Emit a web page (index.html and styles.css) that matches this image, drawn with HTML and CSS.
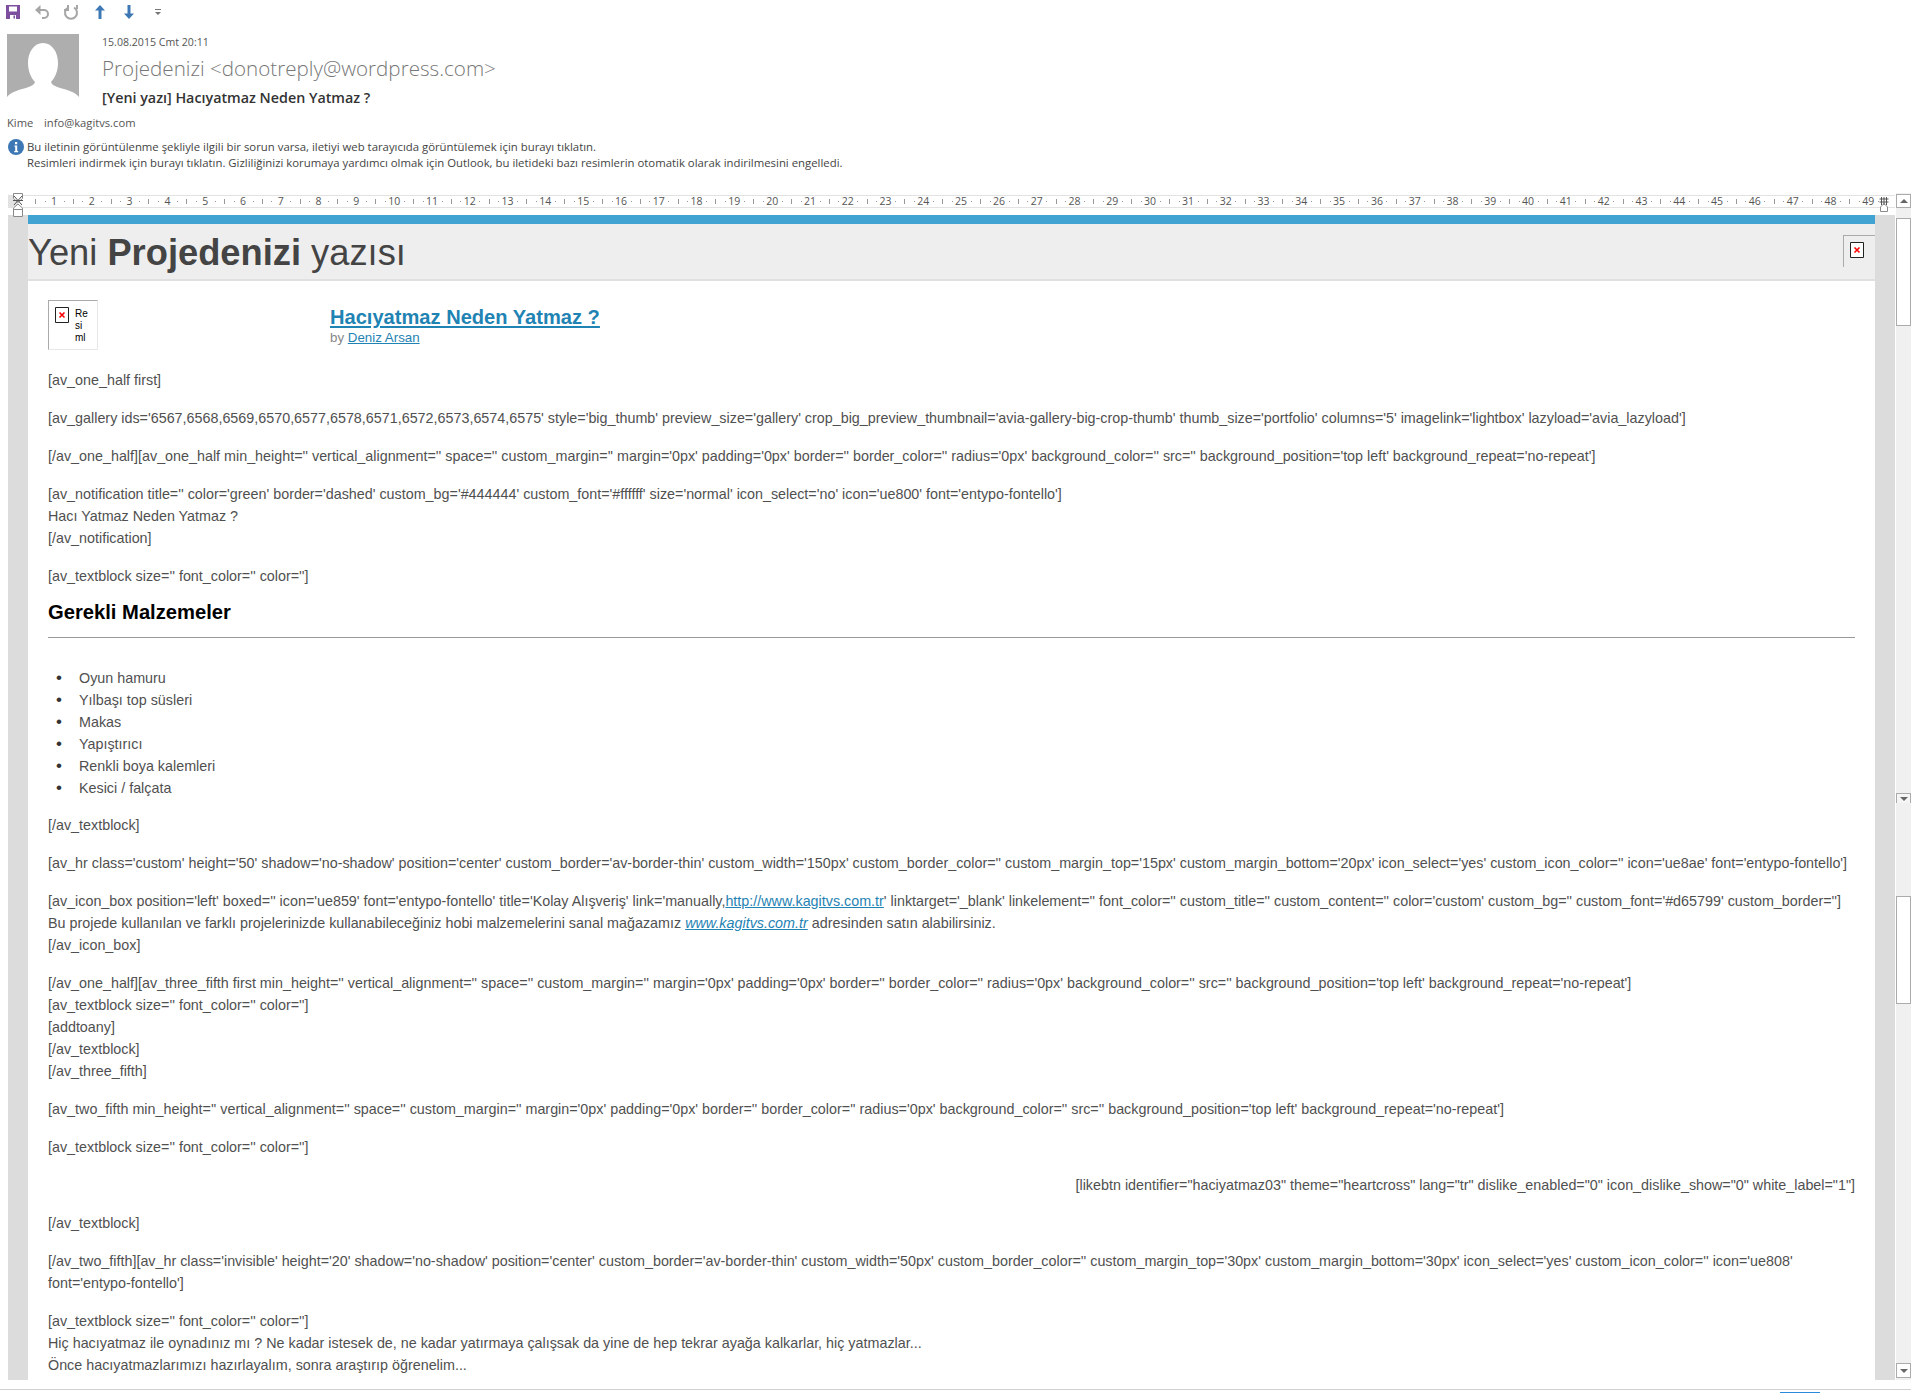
FILE: index.html
```html
<!DOCTYPE html>
<html lang="tr">
<head>
  <meta charset="UTF-8" />
  <title>[Yeni yazı] Hacıyatmaz Neden Yatmaz ?</title>
  <link rel="stylesheet" href="styles.css">
</head>
<body>

  <!-- Hızlı erişim araç çubuğu -->
  <div class="toolbar">
    <svg class="tool" width="16" height="16" viewBox="0 0 16 16"><path fill="#7d4f9e" d="M1 1h14v14H1z"/><path fill="#fff" d="M4 2.500h8v5H4zM5 11h6v4H5z"/><path fill="#7d4f9e" d="M8.500 11.500h1.500v3H8.500z"/></svg>
    <svg class="tool" width="16" height="16" viewBox="0 0 16 16"><path fill="none" stroke="#a6a6a6" stroke-width="2" d="M3 6h7a4 4 0 0 1 4 4v0a4 4 0 0 1-4 4H8"/><path fill="#a6a6a6" d="M6.500 1v10L1 6z"/></svg>
    <svg class="tool" width="16" height="16" viewBox="0 0 16 16"><path fill="none" stroke="#a6a6a6" stroke-width="2" d="M5 3.500a6 6 0 1 0 6 0"/><path fill="#a6a6a6" d="M6 1v6H1V5h3V1zM13 1h2v4h-2z"/></svg>
    <svg class="tool" width="16" height="16" viewBox="0 0 16 16"><path fill="#3d78b5" d="M6.500 15V6.500H3L8 1l5 5.500H9.500V15z"/></svg>
    <svg class="tool" width="16" height="16" viewBox="0 0 16 16"><path fill="#3d78b5" d="M6.500 1v8.500H3L8 15l5-5.500H9.500V1z"/></svg>
    <svg class="tool" width="16" height="16" viewBox="0 0 16 16"><path fill="#777" d="M5 5h6v1H5zM5 8h6l-3 3z"/></svg>
  </div>

  <!-- İleti başlığı -->
  <div class="msg-head">
    <svg class="avatar" width="72" height="72" viewBox="0 0 72 72"><path fill="#aeaeae" d="M0 0h72v72H0z"/><path fill="#fff" d="M36 9c-9 0-15 9-15 20 0 8 3 15 7 19-1 3-4 4-9 6-8 2-15 4-19 9v9h72v-9c-4-5-11-7-19-9-5-2-8-3-9-6 4-4 7-11 7-19 0-11-6-20-15-20z"/></svg>
    <div class="msg-info">
      <div class="msg-date">15.08.2015 Cmt 20:11</div>
      <div class="msg-from">Projedenizi &lt;donotreply@wordpress.com&gt;</div>
      <div class="msg-subject">[Yeni yazı] Hacıyatmaz Neden Yatmaz ?</div>
    </div>
  </div>
  <div class="msg-to"><span class="to-label">Kime</span>info@kagitvs.com</div>
  <div class="msg-notice">
    <svg class="info-icon" width="16" height="16" viewBox="0 0 16 16"><circle cx="8" cy="8" r="8" fill="#3d78b5"/><path fill="#fff" d="M7 3h2.200v2.200H7zM6.500 6.500h2.700V12h1v1.300h-4V12h1V7.800h-.7z"/></svg>
    <div>
      Bu iletinin görüntülenme şekliyle ilgili bir sorun varsa, iletiyi web tarayıcıda görüntülemek için burayı tıklatın.<br>
      Resimleri indirmek için burayı tıklatın. Gizliliğinizi korumaya yardımcı olmak için Outlook, bu iletideki bazı resimlerin otomatik olarak indirilmesini engelledi.
    </div>
  </div>

  <div class="reader">
    <div class="reader-main">
      <!-- Cetvel -->
      <div class="ruler">
        <div class="ruler-start"></div>
        <span>1</span><span>2</span><span>3</span><span>4</span><span>5</span><span>6</span><span>7</span><span>8</span><span>9</span><span>10</span>
        <span>11</span><span>12</span><span>13</span><span>14</span><span>15</span><span>16</span><span>17</span><span>18</span><span>19</span><span>20</span>
        <span>21</span><span>22</span><span>23</span><span>24</span><span>25</span><span>26</span><span>27</span><span>28</span><span>29</span><span>30</span>
        <span>31</span><span>32</span><span>33</span><span>34</span><span>35</span><span>36</span><span>37</span><span>38</span><span>39</span><span>40</span>
        <span>41</span><span>42</span><span>43</span><span>44</span><span>45</span><span>46</span><span>47</span><span>48</span><span>49</span>
        <svg class="marker marker-left" width="12" height="24" viewBox="0 0 12 24"><path fill="#fff" stroke="#8a8a8a" d="M1.500.5h9v5l-4.500 4-4.500-4zM1.500 15l4.500-4 4.500 4v8.500h-9zM1.500 16.500h9"/><path stroke="#555" fill="none" d="M2 3l8 9M10 3l-8 9M1 7.500h10"/></svg>
        <svg class="marker marker-right" width="10" height="16" viewBox="0 0 10 16"><path fill="#fff" stroke="#8a8a8a" d="M1.500 11L5 7.500 8.500 11v4.500h-7z"/><path stroke="#555" fill="none" d="M2.500 1v8M5 1v8M7.500 1v8M.5 3h9M.5 6h9"/></svg>
      </div>

      <div class="doc">
        <div class="doc-strip"></div>
        <div class="page">
          <div class="page-bar"></div>
          <div class="page-title">
            <h1>Yeni <b>Projedenizi</b> yazısı</h1>
            <div class="logo-missing">
              <svg class="broken" width="14" height="16" viewBox="0 0 14 16"><path fill="#fff" stroke="#222" d="M.5.500h13v15H.5z"/><path stroke="#f00" stroke-width="1.600" fill="none" d="M4.500 5.500l5 5M9.500 5.500l-5 5"/></svg>
            </div>
          </div>
          <div class="page-body">
            <div class="post-head">
              <div class="post-thumb-col">
                <div class="post-thumb">
                  <svg class="broken" width="14" height="16" viewBox="0 0 14 16"><path fill="#fff" stroke="#222" d="M.5.500h13v15H.5z"/><path stroke="#f00" stroke-width="1.600" fill="none" d="M4.500 5.500l5 5M9.500 5.500l-5 5"/></svg>
                  <span class="thumb-alt">Re si ml</span>
                </div>
              </div>
              <div class="post-meta">
                <a class="post-link" href="#">Hacıyatmaz Neden Yatmaz ?</a>
                <div class="post-by">by <a href="#">Deniz Arsan</a></div>
              </div>
            </div>

            <p>[av_one_half first]</p>
            <p>[av_gallery ids='6567,6568,6569,6570,6577,6578,6571,6572,6573,6574,6575' style='big_thumb' preview_size='gallery' crop_big_preview_thumbnail='avia-gallery-big-crop-thumb' thumb_size='portfolio' columns='5' imagelink='lightbox' lazyload='avia_lazyload']</p>
            <p>[/av_one_half][av_one_half min_height='' vertical_alignment='' space='' custom_margin='' margin='0px' padding='0px' border='' border_color='' radius='0px' background_color='' src='' background_position='top left' background_repeat='no-repeat']</p>
            <p>[av_notification title='' color='green' border='dashed' custom_bg='#444444' custom_font='#ffffff' size='normal' icon_select='no' icon='ue800' font='entypo-fontello']<br>Hacı Yatmaz Neden Yatmaz ?<br>[/av_notification]</p>
            <p>[av_textblock size='' font_color='' color='']</p>
            <h2>Gerekli Malzemeler</h2>
            <hr>
            <ul>
              <li>Oyun hamuru</li>
              <li>Yılbaşı top süsleri</li>
              <li>Makas</li>
              <li>Yapıştırıcı</li>
              <li>Renkli boya kalemleri</li>
              <li>Kesici / falçata</li>
            </ul>
            <p>[/av_textblock]</p>
            <p>[av_hr class='custom' height='50' shadow='no-shadow' position='center' custom_border='av-border-thin' custom_width='150px' custom_border_color='' custom_margin_top='15px' custom_margin_bottom='20px' icon_select='yes' custom_icon_color='' icon='ue8ae' font='entypo-fontello']</p>
            <p>[av_icon_box position='left' boxed='' icon='ue859' font='entypo-fontello' title='Kolay Alışveriş' link='manually,<a href="#">http://www.kagitvs.com.tr</a>' linktarget='_blank' linkelement='' font_color='' custom_title='' custom_content='' color='custom' custom_bg='' custom_font='#d65799' custom_border='']<br>Bu projede kullanılan ve farklı projelerinizde kullanabileceğiniz hobi malzemelerini sanal mağazamız <a href="#"><i>www.kagitvs.com.tr</i></a> adresinden satın alabilirsiniz.<br>[/av_icon_box]</p>
            <p>[/av_one_half][av_three_fifth first min_height='' vertical_alignment='' space='' custom_margin='' margin='0px' padding='0px' border='' border_color='' radius='0px' background_color='' src='' background_position='top left' background_repeat='no-repeat']<br>[av_textblock size='' font_color='' color='']<br>[addtoany]<br>[/av_textblock]<br>[/av_three_fifth]</p>
            <p>[av_two_fifth min_height='' vertical_alignment='' space='' custom_margin='' margin='0px' padding='0px' border='' border_color='' radius='0px' background_color='' src='' background_position='top left' background_repeat='no-repeat']</p>
            <p>[av_textblock size='' font_color='' color='']</p>
            <p class="right">[likebtn identifier="haciyatmaz03" theme="heartcross" lang="tr" dislike_enabled="0" icon_dislike_show="0" white_label="1"]</p>
            <p>[/av_textblock]</p>
            <p>[/av_two_fifth][av_hr class='invisible' height='20' shadow='no-shadow' position='center' custom_border='av-border-thin' custom_width='50px' custom_border_color='' custom_margin_top='30px' custom_margin_bottom='30px' icon_select='yes' custom_icon_color='' icon='ue808' font='entypo-fontello']</p>
            <p>[av_textblock size='' font_color='' color='']<br>Hiç hacıyatmaz ile oynadınız mı ? Ne kadar istesek de, ne kadar yatırmaya çalışsak da yine de hep tekrar ayağa kalkarlar, hiç yatmazlar...<br>Önce hacıyatmazlarımızı hazırlayalım, sonra araştırıp öğrenelim...</p>
          </div>
        </div>
        <div class="doc-strip"></div>
      </div>
    </div>

    <!-- Kaydırma çubukları -->
    <div class="scrollbar">
      <div class="scroll-btn"><span class="arrow-up"></span></div>
      <div class="scroll-thumb thumb-first"></div>
      <div class="scroll-btn scroll-btn-fade"><span class="arrow-down"></span></div>
      <div class="scroll-thumb thumb-second"></div>
      <div class="scroll-btn scroll-btn-last"><span class="arrow-down"></span></div>
    </div>
  </div>

  <div class="status-line"><div class="status-mark"></div></div>

</body>
</html>
```

FILE: styles.css
```css
* {
  box-sizing: border-box;
}
html, body {
  height: 100%;
}
body {
  margin: 0;
  background: #fff;
  font-family: "Open Sans", "Noto Sans", sans-serif;
  color: #444;
  overflow: hidden;
}

/* Araç çubuğu */
.toolbar {
  height: 24px;
  padding: 4px 0 0 5px;
  display: flex;
  gap: 13px;
}
.tool {
  display: block;
  flex: none;
  width: 16px;
  height: 16px;
}

/* İleti başlığı */
.msg-head {
  height: 72px;
  margin: 10px 0 0 7px;
  display: flex;
  gap: 23px;
}
.avatar {
  display: block;
}
.msg-info {
  padding-top: 1px;
}
.msg-date {
  font-size: 10.600px;
  line-height: 14px;
  color: #555;
}
.msg-from {
  margin-top: 4px;
  font-size: 20.600px;
  line-height: 30px;
  font-weight: 300;
  color: #777;
}
.msg-subject {
  margin-top: 5px;
  font-size: 14.300px;
  line-height: 20px;
  font-weight: 600;
  color: #333;
}
.msg-to {
  margin: 10px 0 0 7px;
  font-size: 11.200px;
  line-height: 14px;
  color: #555;
}
.to-label {
  display: inline-block;
  width: 37px;
}
.msg-notice {
  margin: 9px 0 0 8px;
  display: flex;
  gap: 3px;
  font-size: 11.370px;
  line-height: 16px;
  color: #444;
}
.info-icon {
  flex: none;
  display: block;
}

/* Okuma alanı */
.reader {
  margin-top: 22px;
  display: flex;
  height: 1187px;
}
.reader-main {
  margin-left: 8px;
  width: 1887px;
  flex: none;
  display: flex;
  flex-direction: column;
}

/* Cetvel */
.ruler {
  position: relative;
  margin-top: 2px;
  height: 13px;
  flex: none;
  display: flex;
  border-top: 1px solid #e2e2e2;
  border-bottom: 1px solid #e2e2e2;
}
.ruler-start {
  flex: none;
  width: 27.100px;
  background: linear-gradient(to right, #e2e2e2 10px, #fff 10px);
}
.ruler span {
  flex: none;
  width: 37.800px;
  text-align: center;
  font-size: 10.500px;
  line-height: 11px;
  color: #555;
  background:
    linear-gradient(#999, #999) 9.500px 5px / 1px 1px no-repeat,
    linear-gradient(#999, #999) 0 3px / 1px 5px no-repeat,
    linear-gradient(#999, #999) 28.500px 5px / 1px 1px no-repeat;
}
.marker {
  position: absolute;
  top: -3px;
}
.marker-left {
  left: 4px;
}
.marker-right {
  top: 0;
  right: 6px;
}

.doc {
  margin-top: 7px;
  display: flex;
  height: 1165px;
  overflow: hidden;
}
.doc-strip {
  flex: none;
  width: 20px;
  background: #dcdcdc;
}
.page {
  flex: 1;
  min-width: 0;
  font-family: "Liberation Sans", Arial, sans-serif;
  color: #505050;
}
.page-bar {
  height: 9px;
  background: #41a3d1;
}
.page-title {
  height: 57px;
  display: flex;
  justify-content: space-between;
  align-items: flex-start;
  background: #eee;
  border-bottom: 2px solid #e0e0e0;
}
.page-title h1 {
  margin: 9px 0 0;
  font-size: 36.300px;
  line-height: 40px;
  font-weight: normal;
  color: #444;
}
.logo-missing {
  margin-top: 11px;
  width: 32px;
  height: 32px;
  padding: 6px 0 0 6px;
  border-top: 1px solid #aaa;
  border-left: 1px solid #aaa;
}
.broken {
  flex: none;
  display: block;
}
.page-body {
  padding: 19px 20px 0;
  font-size: 14.330px;
  line-height: 22px;
}
.page-body p {
  margin: 0 0 16px;
}
.page-body a {
  color: #1f83b3;
}
.page-body .right {
  text-align: right;
}
.post-head {
  display: flex;
  height: 59px;
  margin-bottom: 10px;
}
.post-thumb-col {
  flex: none;
  width: 282px;
}
.post-thumb {
  width: 50px;
  height: 50px;
  padding: 6px 0 0 6px;
  display: flex;
  gap: 6px;
  border: 1px solid #e8e8e8;
  border-top-color: #aaa;
  border-left-color: #aaa;
}
.thumb-alt {
  width: 13px;
  padding-top: 1px;
  font-size: 10px;
  line-height: 12px;
  color: #000;
}
.post-meta {
  padding-top: 5px;
}
.page-body .post-link {
  display: block;
  font-size: 20.100px;
  line-height: 24px;
  font-weight: bold;
}
.post-by {
  font-size: 13.330px;
  line-height: 17px;
  color: #888;
}
.page-body h2 {
  margin: -5px 0 0;
  padding-top: 1px;
  font-size: 20.200px;
  line-height: 26px;
  color: #000;
}
.page-body hr {
  margin: 12px 0 29px;
  border: none;
  border-top: 1px solid #999;
}
.page-body ul {
  margin: 0 0 15px;
  padding: 0 0 0 8px;
  list-style: none;
}
.page-body li::before {
  content: "•";
  display: inline-block;
  width: 23px;
  color: #333;
  font-size: 17px;
  line-height: 1;
}

/* Kaydırma çubukları */
.scrollbar {
  flex: none;
  width: 15px;
  margin-left: 1px;
  padding: 1px 0 2px;
  display: flex;
  flex-direction: column;
  background: #f0f0f0;
}
.scroll-btn {
  flex: none;
  height: 14px;
  display: flex;
  align-items: center;
  justify-content: center;
  background: #fff;
  border: 1px solid #ababab;
}
.scroll-btn-fade {
  height: 10px;
  margin-top: 467px;
  border-bottom: none;
  background: #f5f5f5;
}
.scroll-btn-last {
  height: 15px;
  margin-top: auto;
}
.scroll-thumb {
  flex: none;
  height: 108px;
  background: #fff;
  border: 1px solid #ababab;
}
.thumb-first {
  margin-top: 10px;
}
.thumb-second {
  margin-top: 93px;
}
.arrow-up {
  border: 4px solid transparent;
  border-top: none;
  border-bottom: 4px solid #666;
}
.arrow-down {
  border: 4px solid transparent;
  border-bottom: none;
  border-top: 4px solid #666;
}

/* Alt çizgi */
.status-line {
  margin-top: 9px;
  height: 4px;
  border-top: 1px solid #d0d0d0;
  display: flex;
  align-items: flex-end;
  padding-left: 1780px;
}
.status-mark {
  width: 40px;
  height: 1px;
  background: #2a8adc;
}
```
